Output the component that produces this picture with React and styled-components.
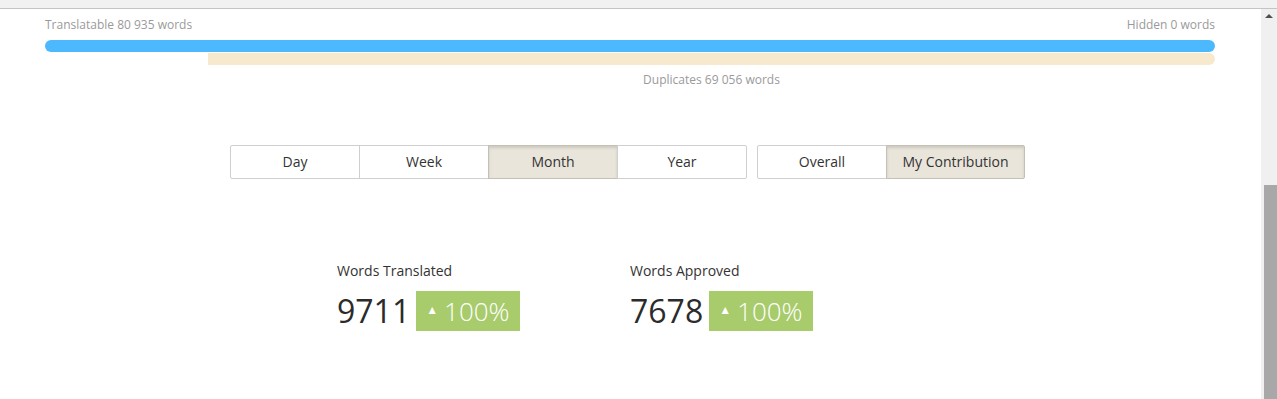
import React from "react";
import styled, { createGlobalStyle } from "styled-components";

const Global = createGlobalStyle`
  html, body { margin: 0; padding: 0; background: #fff; }
  body { font-family: "Open Sans", "DejaVu Sans", sans-serif; overflow: hidden; }
`;

const TopStrip = styled.div`
  height: 8px;
  background: #f1f1f1;
  border-bottom: 1px solid #c4c4c4;
`;

const Shell = styled.div`
  display: flex;
  height: 390px;
`;

const Main = styled.main`
  flex: 1;
  padding: 0 46px 0 45px;
`;

const Scrollbar = styled.div`
  width: 16px;
  background: #f0f0f0;
  display: flex;
  flex-direction: column;
  align-items: center;
`;

const ArrowUp = styled.div`
  margin-top: 5px;
  width: 0;
  height: 0;
  border-left: 4px solid transparent;
  border-right: 4px solid transparent;
  border-bottom: 4px solid #505050;
`;

const Thumb = styled.div`
  margin-top: 167px;
  width: 13px;
  margin-left: 2px;
  flex: 1;
  background: #a8a8a8;
`;

const LabelsRow = styled.div`
  display: flex;
  justify-content: space-between;
  padding-top: 8px;
  font-size: 12px;
  line-height: 16px;
  color: #9a9a9a;
`;

const Bar = styled.div`
  height: 12px;
  border-radius: 6px;
  background: ${(p) => p.$color};
`;

const BlueBar = styled(Bar)`
  margin-top: 7px;
`;

const DupBar = styled(Bar)`
  margin-top: 1px;
  margin-left: 163px;
  border-radius: 0 6px 6px 0;
`;

const DupLabel = styled.div`
  margin-left: 163px;
  margin-top: 7px;
  text-align: center;
  font-size: 12px;
  line-height: 16px;
  color: #9a9a9a;
`;

const Toolbar = styled.div`
  display: flex;
  gap: 10px;
  margin-top: 57px;
  padding-left: 185px;
`;

const Group = styled.div`
  display: flex;
`;

const Btn = styled.button`
  width: ${(p) => p.$w || 130}px;
  height: 34px;
  font-family: inherit;
  font-size: 14px;
  color: #333;
  border: 1px solid #cfcfcf;
  margin-left: -1px;
  background: ${(p) => (p.$active ? "#e9e5db" : "#fff")};
  box-shadow: ${(p) =>
    p.$active ? "inset 0 2px 3px rgba(0,0,0,0.12)" : "none"};
  border-color: ${(p) => (p.$active ? "#c4c0b6" : "#cfcfcf")};
  cursor: pointer;
  padding: 0 0 1px;
  &:first-child { margin-left: 0; border-radius: 2px 0 0 2px; }
  &:last-child { border-radius: 0 2px 2px 0; }
`;

const Stats = styled.div`
  display: flex;
  margin-top: 82px;
  padding-left: 292px;
`;

const Stat = styled.div`
  width: 293px;
`;

const StatLabel = styled.div`
  font-size: 14px;
  line-height: 20px;
  color: #333;
`;

const ValueRow = styled.div`
  display: flex;
  align-items: center;
  gap: 6px;
  margin-top: 10px;
`;

const Value = styled.span`
  font-size: 32px;
  line-height: 40px;
  color: #2b2b2b;
`;

const Badge = styled.span`
  display: inline-flex;
  align-items: center;
  height: 40px;
  padding: 0 10px 0 10px;
  background: #a8cb6c;
  color: #fff;
  font-size: 26px;
  font-weight: 300;
`;

const Tri = styled.span`
  font-size: 12px;
  margin-right: 6px;
  margin-top: -4px;
`;

const periods = ["Day", "Week", "Month", "Year"];

export default function App() {
  return (
    <>
      <Global />
      <TopStrip />
      <Shell>
        <Main>
          <LabelsRow>
            <span>Translatable 80 935 words</span>
            <span>Hidden 0 words</span>
          </LabelsRow>
          <BlueBar $color="#4cb8fd" />
          <DupBar $color="#f7e9cd" />
          <DupLabel>Duplicates 69 056 words</DupLabel>
          <Toolbar>
            <Group>
              {periods.map((p) => (
                <Btn key={p} $active={p === "Month"}>{p}</Btn>
              ))}
            </Group>
            <Group>
              <Btn>Overall</Btn>
              <Btn $w={139} $active>My Contribution</Btn>
            </Group>
          </Toolbar>
          <Stats>
            <Stat>
              <StatLabel>Words Translated</StatLabel>
              <ValueRow>
                <Value>9711</Value>
                <Badge><Tri>▲</Tri>100%</Badge>
              </ValueRow>
            </Stat>
            <Stat>
              <StatLabel>Words Approved</StatLabel>
              <ValueRow>
                <Value>7678</Value>
                <Badge><Tri>▲</Tri>100%</Badge>
              </ValueRow>
            </Stat>
          </Stats>
        </Main>
        <Scrollbar>
          <ArrowUp />
          <Thumb />
        </Scrollbar>
      </Shell>
    </>
  );
}
